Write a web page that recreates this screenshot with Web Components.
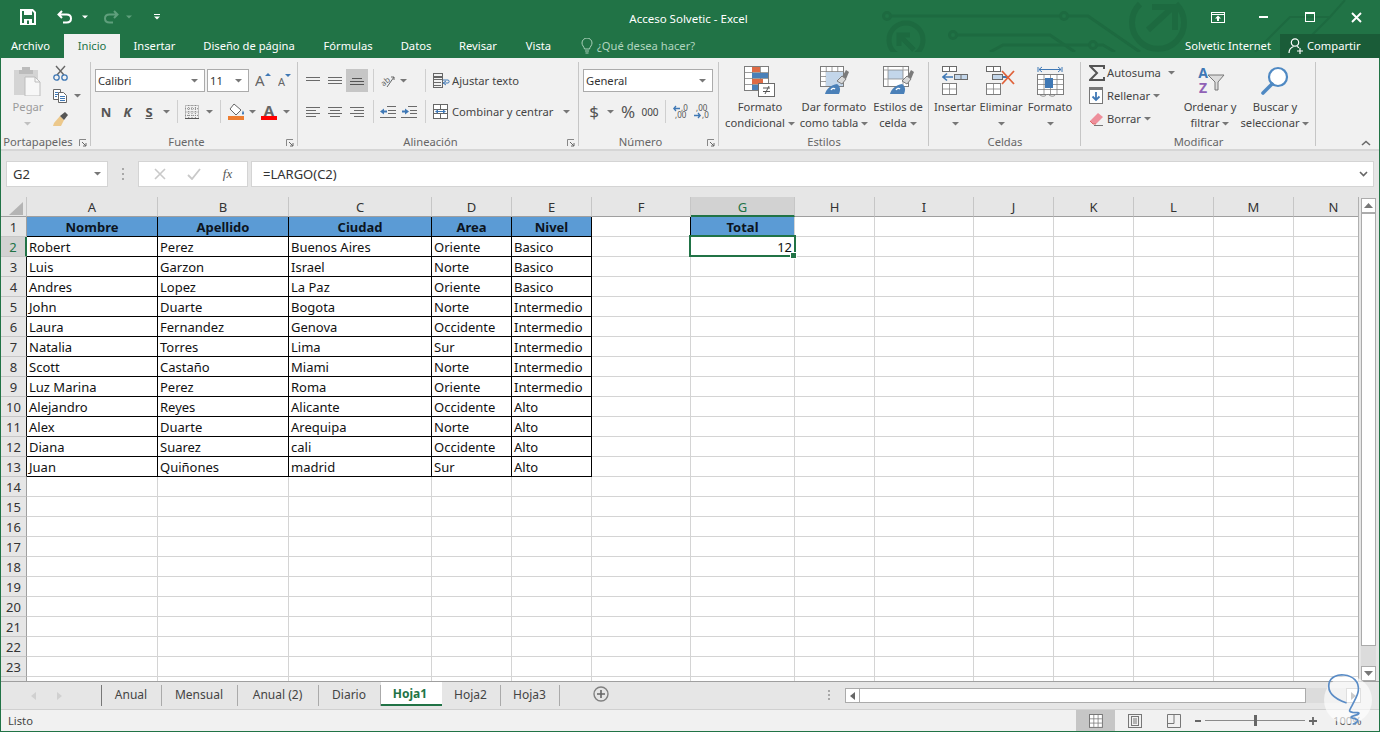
<!DOCTYPE html>
<html lang="es"><head><meta charset="utf-8"><title>Acceso Solvetic - Excel</title>
<style>
html,body{margin:0;padding:0;width:1380px;height:732px;overflow:hidden;background:#f1f1f1}
body{font:11.2px/16px "Noto Sans","Open Sans",sans-serif;color:#444;display:flex;flex-direction:column;position:relative}
</style></head><body>
<xl-header>
  <xl-titlebar>
    <xl-cell w="21" slot="qat"></xl-cell><xl-cell w="14" slot="qat"><xl-icon name="save"></xl-icon></xl-cell>
    <xl-cell w="20" slot="qat"></xl-cell><xl-cell w="20" slot="qat"><xl-icon name="undo"></xl-icon></xl-cell><xl-cell w="19" slot="qat"><xl-icon name="caretw"></xl-icon></xl-cell>
    <xl-cell w="7" slot="qat"></xl-cell><xl-cell w="20" slot="qat"><xl-icon name="redo"></xl-icon></xl-cell><xl-cell w="16" slot="qat"><xl-icon name="caretd"></xl-icon></xl-cell>
    <xl-cell w="10" slot="qat"></xl-cell><xl-cell w="20" slot="qat"><xl-icon name="custom"></xl-icon></xl-cell>
    <xl-cell w="46" slot="win"><xl-icon name="ropt"></xl-icon></xl-cell><xl-cell w="46" slot="win"><xl-icon name="wmin"></xl-icon></xl-cell><xl-cell w="46" slot="win"><xl-icon name="wmax"></xl-icon></xl-cell><xl-cell w="46" slot="win"><xl-icon name="wclose"></xl-icon></xl-cell>
    Acceso Solvetic - Excel
  </xl-titlebar>
  <xl-tabs>
    <xl-tab w="64" file>Archivo</xl-tab><xl-tab w="56" active>Inicio</xl-tab><xl-tab w="69">Insertar</xl-tab><xl-tab w="120">Diseño de página</xl-tab><xl-tab w="78">Fórmulas</xl-tab><xl-tab w="58">Datos</xl-tab><xl-tab w="66">Revisar</xl-tab><xl-tab w="55">Vista</xl-tab>
    <xl-cell w="15"></xl-cell><xl-cell w="11"><xl-icon name="bulb"></xl-icon></xl-cell><xl-cell w="5"></xl-cell><xl-tab hint w="110">¿Qué desea hacer?</xl-tab>
    <xl-tab slot="end" w="95" user>Solvetic Internet</xl-tab>
    <xl-tab slot="end" w="100" share><xl-icon name="person"></xl-icon>Compartir</xl-tab>
  </xl-tabs>
</xl-header>

<xl-app>
<xl-ribbon>
  <xl-group label="Portapapeles" w="90" launcher lp="16">
    <xl-row h="69" pl="3">
      <xl-big w="48" icon="paste" dim>Pegar<br><xl-icon name="caretl"></xl-icon></xl-big>
      <xl-stack w="36" mt="-1">
        <xl-row><xl-cell w="16"><xl-icon name="cut"></xl-icon></xl-cell></xl-row>
        <xl-row><xl-cell w="16"><xl-icon name="copy"></xl-icon></xl-cell><xl-cell w="18"><xl-icon name="caret"></xl-icon></xl-cell></xl-row>
        <xl-row><xl-cell w="16"><xl-icon name="brush"></xl-icon></xl-cell></xl-row>
      </xl-stack>
    </xl-row>
  </xl-group>

  <xl-group label="Fuente" w="207" launcher lp="16">
    <xl-stack pt="7" gap="8" pl="4">
      <xl-row>
        <xl-combo w="110">Calibri</xl-combo><xl-cell w="2"></xl-cell><xl-combo w="42">11</xl-combo>
        <xl-cell w="6"></xl-cell><xl-cell w="16"><xl-icon name="agrow"></xl-icon></xl-cell><xl-cell w="6"></xl-cell><xl-cell w="14"><xl-icon name="ashrink"></xl-icon></xl-cell>
      </xl-row>
      <xl-row>
        <xl-cell w="22" b>N</xl-cell><xl-cell w="21" b i>K</xl-cell><xl-cell w="22" b u>S</xl-cell><xl-cell w="12"><xl-icon name="caret"></xl-icon></xl-cell>
        <xl-cell w="10"><xl-sep></xl-sep></xl-cell><xl-cell w="20"><xl-icon name="borders"></xl-icon></xl-cell><xl-cell w="14"><xl-icon name="caret"></xl-icon></xl-cell>
        <xl-cell w="8"><xl-sep></xl-sep></xl-cell><xl-cell w="24"><xl-icon name="fill"></xl-icon></xl-cell><xl-cell w="8"><xl-icon name="caret"></xl-icon></xl-cell>
        <xl-cell w="26"><xl-icon name="fontcolor"></xl-icon></xl-cell><xl-cell w="8"><xl-icon name="caret"></xl-icon></xl-cell>
      </xl-row>
    </xl-stack>
  </xl-group>

  <xl-group label="Alineación" w="281" launcher lp="16">
    <xl-stack pt="7" gap="8" pl="4">
      <xl-row>
        <xl-cell w="22"><xl-icon name="atop"></xl-icon></xl-cell><xl-cell w="22"><xl-icon name="amid"></xl-icon></xl-cell><xl-cell w="22" on><xl-icon name="abot"></xl-icon></xl-cell>
        <xl-cell w="10"><xl-sep></xl-sep></xl-cell><xl-cell w="20"><xl-icon name="orient"></xl-icon></xl-cell><xl-cell w="10"><xl-icon name="caret"></xl-icon></xl-cell>
        <xl-cell w="15"></xl-cell><xl-cell w="4"><xl-sep></xl-sep></xl-cell><xl-cell w="6"></xl-cell>
        <xl-cell w="19" s><xl-icon name="wrap"></xl-icon></xl-cell><xl-cell t>Ajustar texto</xl-cell>
      </xl-row>
      <xl-row>
        <xl-cell w="22"><xl-icon name="aleft"></xl-icon></xl-cell><xl-cell w="22"><xl-icon name="acenter"></xl-icon></xl-cell><xl-cell w="22"><xl-icon name="aright"></xl-icon></xl-cell>
        <xl-cell w="10"><xl-sep></xl-sep></xl-cell><xl-cell w="20"><xl-icon name="outdent"></xl-icon></xl-cell><xl-cell w="22"><xl-icon name="indent"></xl-icon></xl-cell>
        <xl-cell w="3"></xl-cell><xl-cell w="4"><xl-sep></xl-sep></xl-cell><xl-cell w="6"></xl-cell>
        <xl-cell w="19" s><xl-icon name="merge"></xl-icon></xl-cell><xl-cell w="102" t>Combinar y centrar</xl-cell><xl-cell w="24"><xl-icon name="caret"></xl-icon></xl-cell>
      </xl-row>
    </xl-stack>
  </xl-group>

  <xl-group label="Número" w="140" launcher lp="17">
    <xl-stack pt="7" gap="8" pl="4">
      <xl-row><xl-combo w="130">General</xl-combo></xl-row>
      <xl-row>
        <xl-cell w="22" big>$</xl-cell><xl-cell w="10"><xl-icon name="caret"></xl-icon></xl-cell><xl-cell w="26" big>%</xl-cell><xl-cell w="18" tiny>000</xl-cell>
        <xl-cell w="12"><xl-sep></xl-sep></xl-cell><xl-cell w="20"><xl-icon name="decup"></xl-icon></xl-cell><xl-cell w="22"><xl-icon name="decdn"></xl-icon></xl-cell>
      </xl-row>
    </xl-stack>
  </xl-group>

  <xl-group label="Estilos" w="210">
    <xl-row h="69" pl="4">
      <xl-big w="74" icon="condfmt">Formato<br>condicional <xl-icon name="caret"></xl-icon></xl-big>
      <xl-big w="74" icon="tblfmt">Dar formato<br>como tabla <xl-icon name="caret"></xl-icon></xl-big>
      <xl-big w="54" icon="cellsty">Estilos de<br>celda <xl-icon name="caret"></xl-icon></xl-big>
    </xl-row>
  </xl-group>

  <xl-group label="Celdas" w="152">
    <xl-row h="69" pl="3">
      <xl-big w="46" icon="cins">Insertar<br><xl-icon name="caret"></xl-icon></xl-big>
      <xl-big w="46" icon="cdel">Eliminar<br><xl-icon name="caret"></xl-icon></xl-big>
      <xl-big w="52" icon="cfmt">Formato<br><xl-icon name="caret"></xl-icon></xl-big>
    </xl-row>
  </xl-group>

  <xl-group label="Modificar" w="235">
    <xl-row h="69" pl="5">
      <xl-stack w="94" mt="-1">
        <xl-row><xl-cell w="21"><xl-icon name="sigma"></xl-icon></xl-cell><xl-cell w="60" t>Autosuma</xl-cell><xl-cell w="8"><xl-icon name="caret"></xl-icon></xl-cell></xl-row>
        <xl-row><xl-cell w="21"><xl-icon name="fillc"></xl-icon></xl-cell><xl-cell t>Rellenar <xl-icon name="caret"></xl-icon></xl-cell></xl-row>
        <xl-row><xl-cell w="21"><xl-icon name="eraser"></xl-icon></xl-cell><xl-cell t>Borrar <xl-icon name="caret"></xl-icon></xl-cell></xl-row>
      </xl-stack>
      <xl-big w="60" icon="sort">Ordenar y<br>filtrar <xl-icon name="caret"></xl-icon></xl-big>
      <xl-big w="70" icon="find">Buscar y<br>seleccionar <xl-icon name="caret"></xl-icon></xl-big>
    </xl-row>
  </xl-group>
  <xl-cell w="26" slot="end"><xl-icon name="collapse"></xl-icon></xl-cell>
</xl-ribbon>

<xl-formula name="G2" value="=LARGO(C2)"></xl-formula>
<xl-sheet></xl-sheet>
<xl-sheettabs></xl-sheettabs>
<xl-status></xl-status>
</xl-app>
<xl-mark></xl-mark>

<script>
const G='#6a6a6a',B='#4a80b8',L='#3f78b5',R='#e0623a';
const svg=(w,h,s,extra='')=>`<svg xmlns="http://www.w3.org/2000/svg" width="${w}" height="${h}" viewBox="0 0 ${w} ${h}" ${extra}>${s}</svg>`;
const lines=(arr,c=G)=>arr.map(([x,y,l])=>`<path d="M${x} ${y+.5}h${l}" stroke="${c}"/>`).join('');
const grid=(x,y,cols,rows,cw,ch,c='#7d7d7d')=>{let s=`<rect x="${x+.5}" y="${y+.5}" width="${cols*cw}" height="${rows*ch}" fill="#fff" stroke="${c}"/>`;
 for(let i=1;i<cols;i++)s+=`<path d="M${x+.5+i*cw} ${y}v${rows*ch}" stroke="${c}" opacity=".75"/>`;
 for(let i=1;i<rows;i++)s+=`<path d="M${x} ${y+.5+i*ch}h${cols*cw}" stroke="${c}" opacity=".75"/>`;return s};
const brush=`<path d="M22 11l4-7 3 2-3 7z" fill="#7b7b7b"/><path d="M17 15l5-5 4 3-4 5z" fill="#d9d9d9" stroke="#7b7b7b"/><path d="M5 28c1-5 6-9 12-10 3 2 4 5 2 10z" fill="${B}"/><path d="M11 24c1-2 3-2 4-1" stroke="#fff" stroke-width="1.400" fill="none"/>`;
const I={
 save:svg(16,16,`<path d="M1 1h11.5L15 3.5V15H1z" fill="none" stroke="#fff" stroke-width="2"/><rect x="4" y="1" width="8" height="5" fill="#fff"/><rect x="4" y="10" width="8" height="5" fill="#fff"/><rect x="7" y="11.500" width="2" height="3.500" fill="#217346"/>`),
 undo:svg(16,14,`<path d="M5 1L1.500 4.500 5 8M2 4.500h7.500c3 0 4.500 1.800 4.500 4s-1.500 4-4.500 4H6" fill="none" stroke="#fff" stroke-width="2"/>`),
 redo:svg(16,14,`<path d="M11 1l3.500 3.500L11 8M14 4.500H6.500c-3 0-4.500 1.800-4.500 4s1.500 4 4.500 4H10" fill="none" stroke="#5f9f7c" stroke-width="2"/>`),
 caretw:svg(6,4,`<path d="M0 .5h6L3 3.500z" fill="#fff"/>`),
 caretd:svg(6,4,`<path d="M0 .5h6L3 3.500z" fill="#5f9f7c"/>`),
 custom:svg(6,6,`<path d="M0 .5h6" stroke="#fff"/><path d="M0 2.500h6L3 5.500z" fill="#fff"/>`),
 ropt:svg(14,11,`<rect x=".5" y=".5" width="13" height="10" fill="none" stroke="#fff"/><path d="M.5 2.500h13" stroke="#fff"/><path d="M7 3.500l3 3H8V9H6V6.500H4z" fill="#fff"/>`),
 wmin:svg(10,2,`<rect width="9" height="2" fill="#fff"/>`),
 wmax:svg(11,11,`<rect x=".5" y=".5" width="9" height="9" fill="none" stroke="#fff"/><rect width="10" height="2" fill="#fff"/>`),
 wclose:svg(11,11,`<path d="M1 1l9 9M10 1l-9 9" stroke="#fff" stroke-width="1.900"/>`),
 bulb:svg(12,16,`<path d="M3.500 11C3 8.500 1 7.500 1 5a5 5 0 0110 0c0 2.500-2 3.500-2.500 6zM4 13h4M4.500 15h3" fill="none" stroke="#a9d0b9"/>`),
 person:svg(16,16,`<circle cx="7" cy="4.500" r="3.700" fill="none" stroke="#fff" stroke-width="1.200"/><path d="M1 15c0-3.500 2-5.500 4.500-6.500M9 8.500c1 .4 1.500.8 2 1.300" fill="none" stroke="#fff" stroke-width="1.200"/><path d="M12 10v6M9 13h6" stroke="#fff" stroke-width="1.200"/>`,'style="margin-right:3px"'),
 caret:svg(7,4,`<path d="M0 0h7L3.500 3.500z" fill="#777"/>`),
 caretl:svg(7,4,`<path d="M0 0h7L3.500 3.500z" fill="#c0c0c0"/>`),
 collapse:svg(10,6,`<path d="M1 5l4-3.500L9 5" fill="none" stroke="#6a6a6a" stroke-width="1.600"/>`),
 paste:svg(28,30,`<path d="M0 4h24v25H0z" fill="#d4d4d4"/><path d="M8 4V1h8v3h3v4H5V4z" fill="#bcbcbc"/><path d="M11 11h10l5 5v14H11z" fill="#f7f7f7" stroke="#bdbdbd"/><path d="M21 11v5h5" fill="none" stroke="#bdbdbd"/>`),
 cut:svg(15,16,`<path d="M3 1l8 9M12 1L4 10" stroke="#666" stroke-width="1.400"/><circle cx="3.500" cy="12.500" r="2.700" fill="none" stroke="${L}" stroke-width="1.300"/><circle cx="11.500" cy="12.500" r="2.700" fill="none" stroke="${L}" stroke-width="1.300"/>`),
 copy:svg(15,14,`<path d="M.5.5h7v10h-7z" fill="#fff" stroke="#666"/><path d="M5.500 3.500h5l3 3v7h-8z" fill="#fff" stroke="#666"/>${lines([[2,3,3],[2,5,3],[2,7,2],[7,7,5],[7,9,5],[7,11,5]],L)}`),
 brush:svg(17,15,`<path d="M8 5l4 4-3 6H1l1-3z" fill="#ecc88b"/><path d="M8 5l4 4 4-5-3-3z" fill="#555"/>`),
 borders:svg(14,14,`<path d="M.5.500h13v13h-13zM.5 7h13M7 0v14M3.700 0v14M10.400 0v14M0 3.700h14M0 10.400h14" fill="none" stroke="#888" stroke-dasharray="1 1"/><path d="M0 13.500h14" stroke="#555"/>`),
 fill:svg(17,18,`<path d="M6 1l7 6-5 5-6-6z" fill="#fff" stroke="#666"/><path d="M13 6c2 1 3 3 3 4.500 0 1.500-2 1.500-2 0 0-1 .5-2 1-3z" fill="${L}"/><rect y="13" width="16" height="4" fill="#ed7d31"/>`),
 fontcolor:svg(16,22,`<text x="8" y="14.500" text-anchor="middle" font-family="Noto Sans" font-weight="700" font-size="15" fill="#666">A</text><rect y="15" width="16" height="4" fill="#f00"/>`),
 agrow:svg(16,21,`<text x="0" y="16" font-family="Noto Sans" font-size="15" fill="#666">A</text><path d="M10 6l3-3 3 3z" fill="${L}"/>`),
 ashrink:svg(13,16,`<text x="0" y="13" font-family="Noto Sans" font-size="11" fill="#666">A</text><path d="M7 1h6l-3 3z" fill="${L}"/>`),
 atop:svg(14,7,lines([[0,0,14],[0,3,14]])),
 amid:svg(14,8,lines([[0,0,14],[0,3,14],[0,6,14]])),
 abot:svg(14,9,lines([[2,2,10],[0,5,14],[0,8,14]],'#555')),
 aleft:svg(14,10,lines([[0,0,14],[0,3,10],[0,6,14],[0,9,10]])),
 acenter:svg(14,10,lines([[0,0,14],[2,3,10],[0,6,14],[2,9,10]])),
 aright:svg(14,10,lines([[0,0,14],[4,3,10],[0,6,14],[4,9,10]])),
 orient:svg(18,18,`<text x="2" y="12" font-family="Noto Sans" font-size="8" fill="#666" transform="rotate(-40 7 10)">ab</text><path d="M8 15L15 5M12 5h3v3" fill="none" stroke="#666"/>`),
 outdent:svg(16,12,lines([[7,0,9],[8,4,8],[8,7,8],[0,11,16]])+`<path d="M0 5.500l4-3v2h3v2H4v2z" fill="${L}"/>`),
 indent:svg(16,12,lines([[7,0,9],[9,4,7],[9,7,7],[0,11,16]])+`<path d="M8 5.500l-4-3v2H1v2h3v2z" fill="${L}"/>`),
 wrap:svg(17,15,`<rect x=".5" y=".5" width="9" height="3" fill="none" stroke="#666"/>`+lines([[0,6,9],[0,9,8],[0,12,8]])+`<path d="M.5 0v15" stroke="#666"/><path d="M10 7h5c1.500 0 1.500 3 0 3h-4M13 8l-3 2 3 2" fill="none" stroke="${L}"/><rect x=".5" y="4.500" width="9" height="10" fill="none" stroke="#666"/>`),
 merge:svg(15,15,`<rect x=".5" y=".5" width="14" height="14" fill="#fff" stroke="#666"/><path d="M0 5.500h15M0 9.500h15M7.500 0v5M7.500 10v5" stroke="#666"/><path d="M3 7.500h9" stroke="${L}"/><path d="M5 5.500l-3 2 3 2zM10 5.500l3 2-3 2z" fill="${L}"/>`),
 decup:svg(16,20,`<path d="M7 6.500H1M3 4L.8 6.500 3 9" fill="none" stroke="${L}" stroke-width="1.300"/><text x="8" y="9" font-family="Noto Sans" font-size="8" fill="#555">,0</text><text x="2" y="16" font-family="Noto Sans" font-size="8" fill="#555">,00</text>`),
 decdn:svg(16,20,`<text x="2" y="9" font-family="Noto Sans" font-size="8" fill="#555">,00</text><path d="M0 13.500h6M4 11l2.200 2.500L4 16" fill="none" stroke="${L}" stroke-width="1.300"/><text x="8" y="16" font-family="Noto Sans" font-size="8" fill="#555">,0</text>`),
 condfmt:svg(32,31,grid(0,0,3,4,8,6)+`<rect x="8" y="1" width="8" height="5" fill="#de6b45"/><rect x="8" y="7" width="16" height="5" fill="#4a80b8"/><rect x="8" y="13" width="11" height="5" fill="#de6b45"/><rect x="8" y="19" width="6" height="5" fill="#4a80b8"/><rect x="14.500" y="17.500" width="16" height="13" fill="#fff" stroke="#6a6a6a"/><path d="M19 22h7M19 25.500h7M25 20l-4 8" stroke="#555"/>`),
 tblfmt:svg(29,28,grid(0,0,4,4,5.750,5)+`<rect x="6" y="6" width="17" height="14" fill="#c3d6ea"/>`+brush),
 cellsty:svg(31,28,`<rect x=".5" y=".5" width="25" height="20" fill="#fff" stroke="#7d7d7d"/><rect x="5" y="4" width="15" height="9" fill="#c3d6ea"/><path d="M5 0v21M20 0v21M0 4h26M0 13h26" stroke="#7d7d7d" opacity=".7"/><g transform="translate(2 0)">${brush}</g>`),
 cins:svg(27,30,`<rect x=".5" y=".5" width="14" height="5" fill="#fff" stroke="#6a6a6a"/><path d="M7.500 0v5" stroke="#6a6a6a"/><path d="M1 11h10M5 7.500L1 11l4 3.500" fill="none" stroke="${L}" stroke-width="1.600"/><rect x="12.500" y="8.500" width="13" height="5" fill="#c3d6ea" stroke="#6a6a6a"/><path d="M19 8v6" stroke="#6a6a6a"/>${grid(0,17,2,2,7,5.500)}`),
 cdel:svg(31,30,`<rect x=".5" y=".5" width="14" height="5" fill="#fff" stroke="#6a6a6a"/><path d="M7.500 0v5" stroke="#6a6a6a"/><rect x="6.500" y="8.500" width="10" height="5" fill="#c3d6ea" stroke="#6a6a6a"/><path d="M17 11h4" stroke="${L}" stroke-width="2"/>${grid(0,17,2,2,7,5.500)}<path d="M16 5l12 13M28 5L16 18" stroke="${R}" stroke-width="1.800"/>`),
 cfmt:svg(28,31,`<path d="M2 1v5M26 1v5M3 3.500h22M6 1L3 3.500 6 6M22 1l3 2.500L22 6" fill="none" stroke="${L}"/>`+grid(1,8,4,4,6.500,5)+`<rect x="9" y="12" width="8" height="10" fill="${L}"/><path d="M3 28c3 3 6 3 8 0M12 28c3 3 6 3 8 0" fill="none" stroke="#888"/>`),
 sigma:svg(16,16,`<path d="M15 4V1H1l7 7-7 7h14v-3" fill="none" stroke="#555" stroke-width="2"/>`),
 fillc:svg(15,17,`<rect x=".5" y=".5" width="13" height="16" fill="#fff" stroke="#777"/><rect width="14" height="3" fill="#777"/><path d="M7 5v8M3.500 9.500L7 13l3.500-3.500" fill="none" stroke="${L}" stroke-width="1.800"/>`),
 eraser:svg(15,14,`<path d="M1 9l8-8 5 4-7 7H4z" fill="#ee8f9b"/><path d="M1 9l3 3h3" fill="none" stroke="#d66"/><path d="M5 13.500h9" stroke="#777"/>`),
 sort:svg(30,34,`<text x="8" y="15" text-anchor="middle" font-family="Noto Sans" font-weight="700" font-size="14" fill="#3f78b5">A</text><text x="8" y="30" text-anchor="middle" font-family="Noto Sans" font-weight="700" font-size="14" fill="#9061b5">Z</text><path d="M13 12h16l-6 7v8h-3v-8z" fill="#ddd" stroke="#777"/>`,'style="margin-top:-3px"'),
 find:svg(28,30,`<circle cx="17" cy="11" r="9" fill="#fff" stroke="#4f89c3" stroke-width="2.200"/><path d="M11 18L2 27" stroke="#4f89c3" stroke-width="3.600" stroke-linecap="round"/>`)
};
function def(tag,css,html,init){customElements.define(tag,class extends HTMLElement{constructor(){super();this.attachShadow({mode:'open'});}connectedCallback(){if(this._d)return;this._d=1;const h=typeof html==='function'?html(this):html;this.shadowRoot.innerHTML=`<style>${css}</style>${h}`;if(init)init(this);}})}
const W=e=>{const w=e.getAttribute('w');if(w)e.style.width=w+'px'};

def('xl-icon',':host{display:inline-flex;vertical-align:middle;align-items:center;justify-content:center}svg{display:block}',e=>I[e.getAttribute('name')]||'');
def('xl-sep',':host{display:block;width:1px;height:23px;background:#cfcfcf}','');
def('xl-cell',`:host{display:flex;flex:none;height:100%;align-items:center;justify-content:center;box-sizing:border-box;white-space:nowrap;color:#444}
 :host([b]){font-weight:700;font-size:13px;color:#555}:host([i]){font-style:italic}:host([u]){text-decoration:underline}
 :host([s]){justify-content:flex-start}
 :host([on]){background:#c6c6c6}:host([t]){justify-content:flex-start;gap:3px}:host([big]){font-size:17px;color:#555}:host([tiny]){font-size:10px}`,'<slot></slot>',W);
def('xl-row',':host{display:flex;flex:none;height:23px}',"<slot></slot>",e=>{const h=e.getAttribute('h'),p=e.getAttribute('pl');if(h)e.style.height=h+'px';if(p)e.style.paddingLeft=p+'px'});
def('xl-stack',':host{display:flex;flex:none;flex-direction:column}',"<slot></slot>",e=>{W(e);const g=k=>e.getAttribute(k)||0;e.style.padding=`${g('pt')}px 0 0 ${g('pl')}px`;e.style.gap=g('gap')+'px';e.style.marginTop=g('mt')+'px'});
def('xl-combo',`:host{display:flex;flex:none;box-sizing:border-box;height:23px;background:#fff;border:1px solid #ababab;align-items:center;padding:0 6px 0 2px;color:#333;justify-content:space-between}`,`<slot></slot>${I.caret}`,W);
def('xl-big',`:host{display:flex;flex:none;flex-direction:column;align-items:center;text-align:center;white-space:nowrap;line-height:16px;color:#444}
 :host([dim]){color:#9b9b9b}.i{height:37px;padding-top:4px;box-sizing:border-box;display:flex;align-items:flex-start;justify-content:center}`,e=>`<div class="i">${I[e.getAttribute('icon')]}</div><div><slot></slot></div>`,W);
def('xl-group',`:host{display:flex;flex:none;flex-direction:column;position:relative;box-sizing:border-box;height:87px}
 :host::after{content:"";position:absolute;right:0;top:0;bottom:3px;width:1px;background:#c6c6c6}
 .b{flex:1;display:flex;flex-direction:column;min-height:0}
 .l{height:14px;line-height:14px;box-sizing:border-box;text-align:center;color:#666;position:relative}
 svg{position:absolute;right:4px;top:4px}`,e=>`<div class="b"><slot></slot></div><div class="l" style="padding-right:${e.getAttribute('lp')||0}px">${e.getAttribute('label')}${e.hasAttribute('launcher')?svg(8,8,'<path d="M.5 7V.5H7" fill="none" stroke="#888"/><path d="M3 3l4 4M7 4v3H4" fill="none" stroke="#666"/>'):''}</div>`,W);
def('xl-ribbon',`:host{display:flex;flex:none;box-sizing:border-box;height:93px;padding-top:4px;background:#f1f1f1;border-bottom:2px solid #d6d6d6}
 .e{margin-left:auto;align-self:flex-end;height:12px}`,`<slot></slot><div class="e"><slot name="end"></slot></div>`);
const circuit=`<svg xmlns="http://www.w3.org/2000/svg" width="1380" height="52" viewBox="0 0 1380 52" style="position:absolute;left:0;top:0" fill="none" stroke="#1d6a40" stroke-width="3">
<path d="M891 16H1060M1068 16H1088L1140 52"/><circle cx="887" cy="16" r="3.500"/><circle cx="1064" cy="16" r="3.500"/>
<path d="M957 35H1050L1075 52"/><circle cx="953" cy="35" r="3.500"/>
<path d="M990 52L1003 45H1089M1097 45H1103L1115 52"/><circle cx="1093" cy="45" r="3.500"/>
<circle cx="906" cy="40" r="17" stroke-width="5"/><path d="M900 36L914 50M899 46V35H910" stroke-width="5"/>
<path d="M1140 4A26 26 0 1 0 1176 4" stroke-width="6"/><path d="M1148 30L1173 7M1152 7H1175V30" stroke-width="6"/>
<path d="M1255 52L1290 17H1330M1295 52L1330 17L1345 0M1365 52L1380 37" stroke-width="2"/></svg>`;
def('xl-header',`:host{display:block;flex:none;height:58px;background:#217346;position:relative;color:#fff}::slotted(*){position:relative}`,circuit+'<slot></slot>');
def('xl-titlebar',`:host{display:grid;grid-template-columns:1fr auto 1fr;height:34px;align-items:center;color:#fff;position:relative;font-size:11.500px}
 .q{display:flex;height:32px;align-items:center}.w{display:flex;justify-content:flex-end;height:32px;padding-right:1px}.t{padding:3px 3px 0 0}`,`<div class="q"><slot name="qat"></slot></div><div class="t"><slot></slot></div><div class="w"><slot name="win"></slot></div>`);
def('xl-tabs',`:host{display:flex;height:24px;position:relative}.s{display:flex;flex:1}.e{display:flex}`,`<div class="s"><slot></slot></div><div class="e"><slot name="end"></slot></div>`);
def('xl-tab',`:host{display:flex;flex:none;height:24px;align-items:center;justify-content:center;color:#fff;white-space:nowrap}
 :host([file]){padding-right:3px;box-sizing:border-box}
 :host([active]){background:#f1f1f1;color:#217346}:host([hint]){color:#b0d5bf;justify-content:flex-start}:host([share]){background:#1a5c38;justify-content:flex-start;padding-left:8px;box-sizing:border-box}:host([user]){justify-content:flex-start}`,'<slot></slot>',W);
def('xl-app',`:host{display:flex;flex:1;flex-direction:column;min-height:0;border:solid #217346;border-width:0 1px 1px}`,'<slot></slot>');
def('xl-formula',`:host{display:flex;flex:none;height:46px;box-sizing:border-box;padding:10px 5px 10px 5px;background:#e6e6e6;color:#333}
 .box{background:#fff;border:1px solid #d4d4d4;box-sizing:border-box;display:flex;align-items:center;height:26px}
 .n{width:102px;justify-content:space-between;padding:0 6px;font-size:13px}.d{width:30px;display:flex;flex-direction:column;gap:3px;align-items:center;justify-content:center}.d i{width:2px;height:2px;background:#a8a8a8;display:block}
 .b{width:110px;justify-content:space-around;padding:0 4px}.v{flex:1;margin-left:3px;padding:0 5px 0 11px;justify-content:space-between;font-size:13px}
 .fx{font:italic 13px/16px "Liberation Serif",serif;color:#555}`,e=>`<div class="box n"><span>${e.getAttribute('name')}</span>${I.caret}</div><div class="d"><i></i><i></i><i></i></div>
 <div class="box b">${svg(12,12,'<path d="M1 1l10 10M11 1L1 11" stroke="#c9c9c9" stroke-width="1.600"/>')}${svg(14,12,'<path d="M1 7l4 4 8-10" fill="none" stroke="#c9c9c9" stroke-width="1.800"/>')}<span class="fx">fx</span></div>
 <div class="box v"><span>${e.getAttribute('value')}</span>${svg(9,6,'<path d="M1 1l3.500 3.500L8 1" fill="none" stroke="#666" stroke-width="1.600"/>')}</div>`);

const colW=[131,131,143,80,80,99,104,80,99,80,80,80,80,80];
const colN='ABCDEFGHIJKLMN'.split('');
const data=[['Nombre','Apellido','Ciudad','Area','Nivel'],['Robert','Perez','Buenos Aires','Oriente','Basico'],['Luis','Garzon','Israel','Norte','Basico'],['Andres','Lopez','La Paz','Oriente','Basico'],['John','Duarte','Bogota','Norte','Intermedio'],['Laura','Fernandez','Genova','Occidente','Intermedio'],['Natalia','Torres','Lima','Sur','Intermedio'],['Scott','Castaño','Miami','Norte','Intermedio'],['Luz Marina','Perez','Roma','Oriente','Intermedio'],['Alejandro','Reyes','Alicante','Occidente','Alto'],['Alex','Duarte','Arequipa','Norte','Alto'],['Diana','Suarez','cali','Occidente','Alto'],['Juan','Quiñones','madrid','Sur','Alto']];
function sheetHTML(){let h='<div class="grid"><div class="corner"><svg width="14" height="13"><path d="M14 0v13H0z" fill="#b4b4b4"/></svg></div>';
 colN.forEach((c,i)=>h+=`<div class="ch${c==='G'?' on':''}">${c}</div>`);
 for(let r=1;r<=24;r++){h+=`<div class="rh${r===2?' on':''}${r>=3&&r<=13?' blk':''}">${r<24?r:''}</div>`;
  for(let c=0;c<14;c++){let cls='c',t='';
   if(c<5&&r<=13){cls+=' t';t=data[r-1][c];if(r===1)cls+=' h'}
   if(c===5&&r===1)cls+=' fr';
   if(c===6&&r===1){cls+=' h tt';t='Total'}
   if(c===6&&r===2){cls+=' sel';t='12<i></i><b></b>'}
   h+=`<div class="${cls}">${t}</div>`}}
 return h+'</div><div class="vs"><div class="bt up">'+svg(9,5,'<path d="M0 5l4.500-5L9 5z" fill="#777"/>')+'</div><div class="th"></div><div class="tr"></div><div class="bt">'+svg(9,5,'<path d="M0 0l4.500 5L9 0z" fill="#777"/>')+'</div></div>'}
def('xl-sheet',`:host{display:flex;flex:none;height:485px;background:#e6e6e6;border-bottom:1px solid #9f9f9f;box-sizing:border-box}
 .grid{display:grid;grid-template-columns:26px ${colW.map(w=>w+'px').join(' ')};grid-template-rows:20px repeat(24,20px);width:1358px;height:484px;overflow:hidden;font-size:13px;line-height:20px;background:#fff;color:#111;position:relative;border-right:1px solid #b0b0b0;box-sizing:border-box;flex:none}
 .corner{background:#e6e6e6;border-right:1px solid #c6c6c6;border-bottom:1px solid #9f9f9f;display:flex;align-items:flex-end;justify-content:flex-end;padding:0 3px 0 0;box-sizing:border-box}
 .corner svg{margin-bottom:1px}
 .ch{background:#e6e6e6;border-right:1px solid #c6c6c6;border-bottom:1px solid #9f9f9f;text-align:center;box-sizing:border-box;color:#333}
 .ch.on{background:#d2d2d2;border-bottom:2px solid #217346;color:#217346;line-height:20px}
 .rh{background:#e6e6e6;border-right:1px solid #9f9f9f;border-bottom:1px solid #c6c6c6;text-align:center;box-sizing:border-box;color:#333}
 .rh.on{background:#d2d2d2;color:#217346;border-right:2px solid #217346}.rh.blk{border-right-color:#111}
 .c{border-right:1px solid #d4d4d4;border-bottom:1px solid #d4d4d4;box-sizing:border-box;padding:0 2px;white-space:nowrap;position:relative}
 .t{border-color:#000}.fr{border-right-color:#000}
 .h{background:#5b9bd5;text-align:center;font-weight:700;color:#0c1420}
 .tt{border-bottom-color:#217346}
 .sel{text-align:right;overflow:visible;z-index:2}
 .sel i{position:absolute;left:-2px;right:-2px;top:-2px;bottom:-1px;border:2px solid #217346;pointer-events:none}
 .sel b{position:absolute;right:-3px;bottom:-3px;background:#217346;border:1px solid #fff;box-sizing:border-box;width:7px;height:7px}
 .vs{width:20px;box-sizing:border-box;padding:1px 3px 0 2px;display:flex;flex-direction:column;background:#e6e6e6}
 .bt{height:15px;background:#fff;border:1px solid #ababab;display:flex;align-items:center;justify-content:center;box-sizing:border-box;flex:none}
 .th{height:433px;background:#fff;border:1px solid #ababab;box-sizing:border-box;flex:none}.tr{flex:1;background:#dcdcdc}`,sheetHTML);
def('xl-sheettabs',`:host{display:flex;flex:none;height:28px;box-sizing:border-box;background:#e6e6e6;border-bottom:1px solid #d0d0d0;color:#444;position:relative;font-size:12px}
 .a{display:flex;align-items:center;width:100px;justify-content:space-around;padding:0 29px 0 19px;box-sizing:border-box}
 .t{display:flex;align-items:center;justify-content:center;flex:none;box-sizing:border-box;border-right:1px solid #aaa;height:21px;margin-top:3px;padding:0 1px 1px 0}
 .f{border-left:1px solid #777}
 .act{background:#fff;color:#217346;font-weight:700;border:0;height:24px;margin-top:0;border-bottom:2px solid #217346;padding:1px 3px 0 0}
 .pl{margin-left:33px;align-self:center}
 .dots{position:absolute;left:827px;top:8px;display:flex;flex-direction:column;gap:2px}.dots i{width:2px;height:2px;background:#a8a8a8}
 .hs{position:absolute;left:844px;top:6px;width:516px;height:15px;display:flex;background:#dcdcdc}
 .b{width:15px;background:#fff;border:1px solid #ababab;box-sizing:border-box;display:flex;align-items:center;justify-content:center}
 .h{width:446px;background:#fff;border:1px solid #ababab;border-left:0;box-sizing:border-box}.sp{flex:1}`,()=>{
  const ws=[['Anual',60,1],['Mensual',76],['Anual (2)',81],['Diario',62],['Hoja1',61,0,1],['Hoja2',59],['Hoja3',59]];
  return `<div class="a">${svg(5,8,'<path d="M5 0L0 4l5 4z" fill="#d0d0d0"/>')}${svg(5,8,'<path d="M0 0l5 4-5 4z" fill="#d0d0d0"/>')}</div>`+ws.map(([t,w,f,a])=>`<div class="t${f?' f':''}${a?' act':''}" style="width:${w+(f?1:0)}px">${t}</div>`).join('')+
  `<div class="pl">${svg(16,16,'<circle cx="8" cy="8" r="7" fill="none" stroke="#808080" stroke-width="1.400"/><path d="M8 4v8M4 8h8" stroke="#666" stroke-width="1.600"/>')}</div><div class="dots"><i></i><i></i><i></i></div><div class="hs"><div class="b">${svg(5,8,'<path d="M5 0L0 4l5 4z" fill="#666"/>')}</div><div class="h"></div><div class="sp"></div><div class="b">${svg(5,8,'<path d="M0 0l5 4-5 4z" fill="#777"/>')}</div></div>`});
def('xl-status',`:host{display:flex;flex:1;align-items:center;background:#f1f1f1;padding-left:7px;color:#444;position:relative}
 .s{flex:1}.r{display:flex;align-items:center;height:100%}.v{display:flex;align-items:center;justify-content:center;width:39px;height:100%}.v.on{background:#c6c6c6}
 .z{display:flex;align-items:center;margin-left:2px}.tr{width:100px;height:1px;background:#8a8a8a;position:relative;margin:0 4px}.tr i{position:absolute;left:49px;top:-5px;width:3px;height:11px;background:#666}
 .p{width:62px;padding-left:16px;box-sizing:border-box;color:#555;white-space:nowrap}`,()=>`<span>Listo</span><div class="s"></div><div class="r"><div class="v on">${svg(14,14,grid(0,0,3,3,4.300,4.300,'#777'))}</div><div class="v">${svg(14,14,'<rect x=".5" y=".5" width="13" height="13" fill="none" stroke="#777"/><rect x="3.500" y="2.500" width="7" height="9" fill="none" stroke="#777"/><path d="M5 5h4M5 7h4M5 9h4" stroke="#777"/>')}</div><div class="v">${svg(14,14,'<path d="M.5.5h13v13H.5zM.5 9.500H7V0M7 9.500" fill="none" stroke="#777"/>')}</div><div class="z">${svg(6,2,'<rect width="6" height="2" fill="#666"/>')}<div class="tr"><i></i></div>${svg(8,8,'<path d="M4 0v8M0 4h8" stroke="#666" stroke-width="1.800"/>')}</div><div class="p">100%</div></div>`);
def('xl-mark',`:host{position:absolute;left:1320px;top:670px;width:60px;height:62px;pointer-events:none}`,`<svg xmlns="http://www.w3.org/2000/svg" width="60" height="62" viewBox="0 0 180 186"><circle cx="84" cy="90" r="72" fill="#fff" fill-opacity=".62"/><path d="M78 98C40 85 22 65 27 40 32 20 52 13 72 15 100 18 118 35 115 62 113 78 104 90 96 107 88 122 84 125 98 127 116 127 122 128 112 134 92 140 86 142 104 146 118 150 116 155 100 162" fill="none" stroke="#5a8cc6" stroke-width="5" stroke-linecap="round" stroke-linejoin="round"/></svg>`);
</script>
</body></html>
